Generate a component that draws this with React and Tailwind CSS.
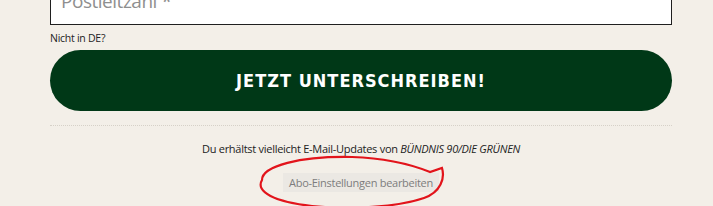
import React from 'react'

export default function App() {
  return (
    <div className="relative w-[713px] h-[206px] overflow-hidden bg-[#f3efe8] font-['Open_Sans',sans-serif]">
      <div className="ml-[50px] w-[622px] -mt-[22px]">
        <div className="h-[47px] bg-white border border-[#1f1f1f] flex items-center px-[10px]">
          <span className="text-[19px] text-[#8f8f8f] tracking-tight">Postleitzahl *</span>
        </div>
        <div className="mt-[6px] text-[10.5px] leading-[14px] text-[#222] tracking-tight">Nicht in DE?</div>
        <button className="mt-[5px] w-full h-[61px] rounded-full bg-[#003817] text-white text-[18px] font-bold tracking-[1px] font-['DejaVu_Sans_Condensed',sans-serif]">
          JETZT UNTERSCHREIBEN!
        </button>
        <div className="mt-[14px] border-t border-dotted border-[#d6d1c8]"></div>
        <p className="mt-[16px] text-center text-[11px] leading-[14px] text-[#222] tracking-tight">
          Du erhältst vielleicht E-Mail-Updates von <em>BÜNDNIS 90/DIE GRÜNEN</em>
        </p>
        <div className="mt-[17px] flex justify-center">
          <span className="bg-[#ebe8e3] px-[6px] h-[19px] leading-[19px] text-[11px] text-[#7d7d7d] tracking-tight">Abo-Einstellungen bearbeiten</span>
        </div>
      </div>
      <svg className="absolute left-0 top-0 pointer-events-none" width="713" height="206" viewBox="0 0 713 206">
        <path d="M 262 180 C 262 166, 300 156, 352 157 C 385 158, 410 164, 430 172 L 442 168 C 445 178, 441 192, 424 198 C 398 207, 350 210, 312 206 C 275 202, 255 192, 262 180" fill="none" stroke="#e2141b" strokeWidth="2.2" strokeLinecap="round" />
      </svg>
    </div>
  )
}
